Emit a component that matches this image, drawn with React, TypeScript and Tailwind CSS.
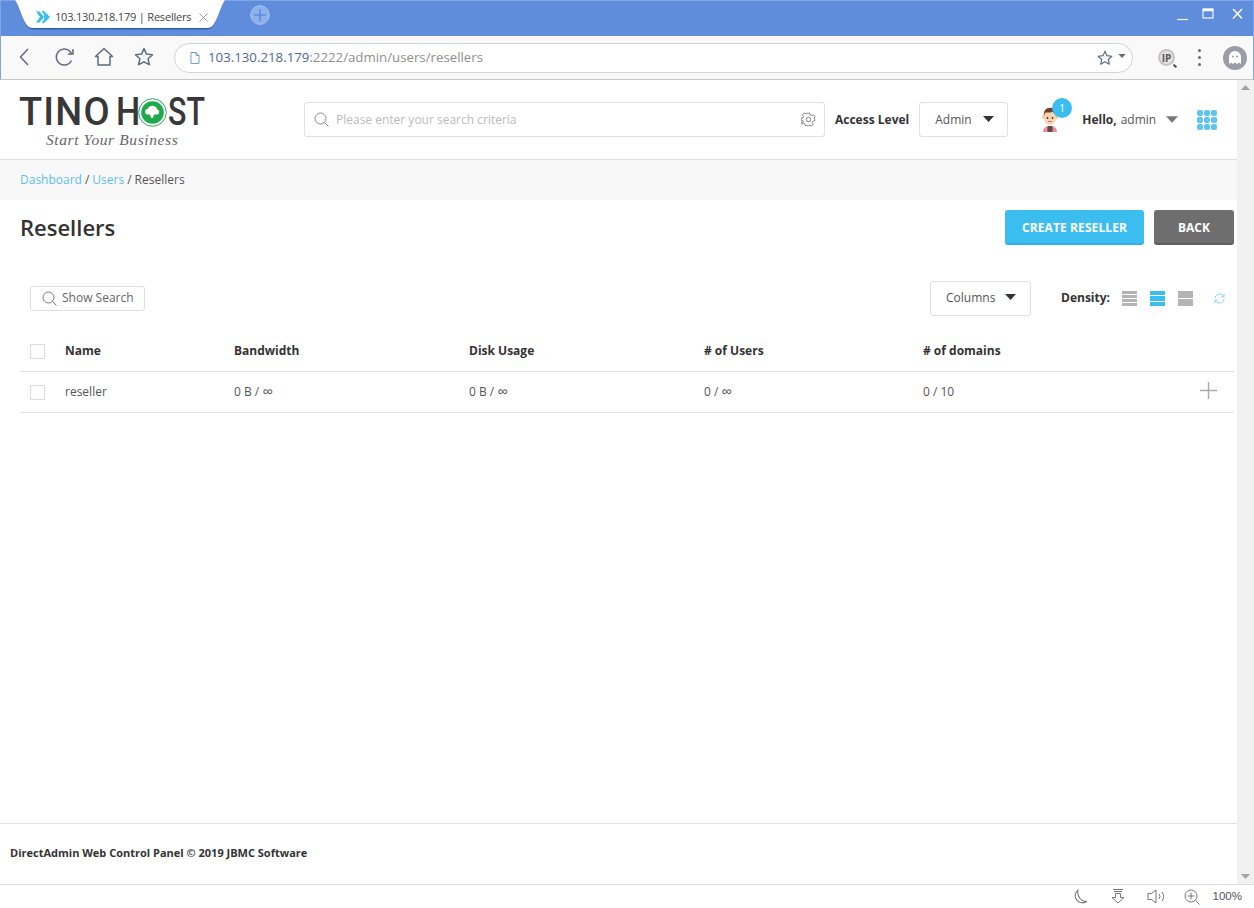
import React from "react";

const Tri = ({ c = "#333", w = 11, h = 6 }: { c?: string; w?: number; h?: number }) => (
  <svg width={w} height={h} viewBox="0 0 11 6"><path d="M0 0h11L5.500 6z" fill={c} /></svg>
);

const Star = ({ size = 20, stroke = "#5f6b7e" }: { size?: number; stroke?: string }) => (
  <svg width={size} height={size} viewBox="0 0 20 20" fill="none" stroke={stroke} strokeWidth="1.500" strokeLinejoin="round">
    <path d="M10 1.600l2.500 5.500 6 .7-4.400 4 1.200 5.900L10 14.800l-5.300 2.900 1.200-5.900-4.400-4 6-.7z" />
  </svg>
);

function BrowserChrome() {
  return (
    <div className="shrink-0">
      <div className="relative h-[36px] bg-[#5f8ddb] border-t border-l border-r border-[#7fa5e6] flex items-start">
        <svg className="absolute left-[3px] top-[-1px]" width="226" height="31" viewBox="0 0 226 31">
          <path d="M11 0C16 8 18 18 22 25c2 3 4 4.500 8 4.500h172c4 0 6-1.500 8-4.500 4-7 6-17 11-25z" fill="#2f5fb0" />
          <path d="M11 0C16 8 18 18 22 24c2 3 4 4 8 4h172c4 0 6-1 8-4 4-6 6-16 11-24z" fill="#ffffff" />
        </svg>
        <div className="relative ml-[35px] mt-[8px] flex items-center h-[16px] w-[172px]">
          <svg width="14" height="14" viewBox="0 0 14 14" className="shrink-0">
            <path d="M0 1.500h3.500L8 7l-4.500 5.500H0L4 7z" fill="#35bdf2" />
            <path d="M5.500 1h2.500l6 6-6 6H5.500L10 7z" fill="#35bdf2" />
            <path d="M8 4.500L10.500 7 8 9.500z" fill="#35bdf2" />
          </svg>
          <span className="ml-[5px] text-[11px] leading-[16px] text-[#444] whitespace-nowrap w-[135px] tracking-[-0.2px]">103.130.218.179 | Resellers</span>
          <svg className="ml-[9px] shrink-0" width="9" height="9" viewBox="0 0 9 9" stroke="#9a9a9a" strokeWidth="1"><path d="M.5.5l8 8M8.500.5l-8 8" /></svg>
        </div>
        <svg className="relative ml-[42px] mt-[4px]" width="20" height="20" viewBox="0 0 20 20">
          <circle cx="10" cy="10" r="9.300" fill="#8fb0ec" stroke="#a9c3f2" />
          <path d="M10 4v12M4 10h12" stroke="#5f8ddb" strokeWidth="1.600" />
        </svg>
        <div className="ml-auto mr-[9px] mt-[6px] flex items-center">
          <svg width="13" height="14" viewBox="0 0 13 14"><path d="M1 12.500h11" stroke="#fff" strokeWidth="1.200" /></svg>
          <svg className="ml-[13px]" width="13" height="12" viewBox="0 0 13 12" fill="none" stroke="#fff"><rect x="1" y="1" width="10" height="9" strokeWidth="1.100" /><path d="M1 2h10" strokeWidth="2.500" /></svg>
          <svg className="ml-[16px]" width="13" height="12" viewBox="0 0 13 12" stroke="#fff" strokeWidth="1.400"><path d="M2 1l9 9.500M11 1L2 10.500" /></svg>
        </div>
      </div>
      <div className="h-[44px] bg-[#f9f9f9] border-b border-[#c8c8c8] border-l border-l-[#7fa5e6] border-r border-r-[#7fa5e6] flex items-center relative">
        <div className="w-[173px] shrink-0 flex items-center pl-[17px] mb-[2px]">
          <svg width="12" height="20" viewBox="0 0 12 20" fill="none" stroke="#5f6b7e" strokeWidth="1.500"><path d="M10 2L2.500 10 10 18" /></svg>
          <svg className="ml-[24px]" width="21" height="20" viewBox="0 0 21 20" fill="none" stroke="#5f6b7e" strokeWidth="1.500">
            <path d="M17.500 13.500A8 8 0 1 1 16 4.500l2 2" /><path d="M19 2v5h-5" />
          </svg>
          <svg className="ml-[19px]" width="20" height="20" viewBox="0 0 20 20" fill="none" stroke="#5f6b7e" strokeWidth="1.500" strokeLinejoin="round"><path d="M1.500 9.500L10 1.500l8.500 8h-2.500v8.500H4V9.500z" /></svg>
          <span className="ml-[20px]"><Star /></span>
        </div>
        <div className="w-[959px] h-[30px] shrink-0 bg-white border border-[#d4d4d4] rounded-full flex items-center pl-[15px] pr-[6px] text-[13.25px]">
          <svg width="10" height="12" viewBox="0 0 10 12" fill="none" stroke="#7d9bc9"><path d="M1 .5h5l3 3v8H1zM6 .5v3h3" /></svg>
          <span className="ml-[8px] text-[#4c6a96]">103.130.218.179</span>
          <span className="text-[#8f8f8f]">:2222/admin/users/resellers</span>
          <span className="ml-auto"><Star size={16} /></span>
          <span className="ml-[5px] mb-[3px]"><Tri c="#5f6b7e" w={8} h={4} /></span>
        </div>
        <div className="flex items-center ml-[25px]">
          <div className="relative w-[17px] h-[17px] rounded-full bg-[#e2e2e2] border-2 border-[#c4c4c4] flex items-center justify-center text-[10px] leading-none font-bold text-[#555]">
            IP
            <span className="absolute right-[-4px] bottom-[-3px] w-[4px] h-[2px] bg-[#444] rotate-45" />
          </div>
          <div className="ml-[23px] flex flex-col gap-[4px]">
            <span className="w-[3px] h-[3px] rounded-full bg-[#5f6b7e]" />
            <span className="w-[3px] h-[3px] rounded-full bg-[#5f6b7e]" />
            <span className="w-[3px] h-[3px] rounded-full bg-[#5f6b7e]" />
          </div>
          <div className="ml-[22px] w-[24px] h-[24px] rounded-full bg-[#9a9ca6] flex items-center justify-center">
            <svg width="14" height="15" viewBox="0 0 14 15"><path d="M1 7a6 6 0 0 1 12 0v7l-2-1.500-2 1.500-2-1.500L5 14l-2-1.500L1 14z" fill="#fff" /><circle cx="5" cy="6.500" r="1" fill="#9a9ca6" /><circle cx="9" cy="6.500" r="1" fill="#9a9ca6" /></svg>
          </div>
        </div>
      </div>
    </div>
  );
}

function Logo() {
  return (
    <div className="w-[304px] shrink-0 pl-[19px]">
      <div className="flex items-center h-[32px] mt-[16px] text-[38px] leading-[32px] font-medium text-[#383838] font-['Roboto',sans-serif]">
        <span className="tracking-[1.200px]">TINO</span>
        <span className="ml-[5px] w-[22px] inline-block scale-x-[0.9] origin-left">H</span>
        <svg width="29" height="29" viewBox="0 0 29 29">
          <circle cx="14.500" cy="14.500" r="13.800" fill="none" stroke="#2eae5a" strokeWidth="1" />
          <circle cx="14.500" cy="14.500" r="11.300" fill="#1fa84e" />
          <path d="M9 16.500a3 3 0 0 1 .8-5.800 5 5 0 0 1 9.400.5 2.800 2.800 0 0 1 .3 5.300h-3.500l-1 3.500h-2l-1-3.500z" fill="#fff" />
        </svg>
        <span className="ml-[1px] w-[37px] inline-block scale-x-[0.8] origin-left whitespace-nowrap">ST</span>
      </div>
      <div className="pl-[27px] mt-[3px] text-[15.500px] leading-[18px] italic text-[#666] font-['Liberation_Serif',serif] tracking-[0.6px]">Start Your Business</div>
    </div>
  );
}

function Header() {
  return (
    <div className="h-[80px] shrink-0 border-b border-[#dedede] flex items-start">
      <Logo />
      <div className="pt-[22px] flex items-start">
        <div className="w-[521px] h-[35px] border border-[#e0e0e0] rounded-[3px] flex items-center pl-[9px] pr-[8px]">
          <svg width="15" height="15" viewBox="0 0 15 15" fill="none" stroke="#8a8a8a"><circle cx="6.500" cy="6.500" r="5.500" /><path d="M10.500 10.500l4 4" /></svg>
          <span className="ml-[7px] text-[12px] text-[#bcbcbc]">Please enter your search criteria</span>
          <svg className="ml-auto" width="15" height="15" viewBox="0 0 24 24" fill="none" stroke="#777" strokeWidth="1.500">
            <path d="M10 2h4l.7 3 2.300 1 2.700-1.600 2.800 2.800L20.900 10l1 2.300 0 0 0 1.700-3 .7-1 2.300 1.600 2.700-2.800 2.800-2.700-1.600-2.300 1-.7 0h-4l-.7-3-2.300-1-2.700 1.600-2.800-2.800L3.900 16l-1-2.300L0 13v-3l3-.7 1-2.300-1.600-2.700 2.800-2.800L8 3.100 9.300 2.500z" />
            <circle cx="12" cy="12" r="3.500" />
          </svg>
        </div>
        <span className="ml-[10px] mt-[9px] text-[12px] leading-[17px] font-bold text-[#333] whitespace-nowrap">Access Level</span>
        <div className="ml-[10px] w-[89px] h-[35px] border border-[#e0e0e0] rounded-[3px] flex items-center pl-[15px] text-[12px] text-[#555]">
          Admin
          <span className="ml-[11px] mb-[1px]"><Tri /></span>
        </div>
      </div>
      <div className="ml-[32px] pt-[18px] flex items-start">
        <div className="relative w-[24px] h-[34px]">
          <svg className="absolute left-0 top-[9px]" width="20" height="25" viewBox="0 0 20 25">
            <path d="M3 25c0-4 3-6 7-6s7 2 7 6z" fill="#ee8ba0" />
            <path d="M7.500 19h5v6h-5z" fill="#5d4a4a" />
            <circle cx="3.500" cy="10" r="1.800" fill="#f6c8a2" /><circle cx="16.500" cy="10" r="1.800" fill="#f6c8a2" />
            <path d="M4 9c0-4 2-5 6-5s6 1 6 5c0 6-3 9-6 9s-6-3-6-9z" fill="#fad3b0" />
            <path d="M4 9C3 3 7 0 12 1c4 0 5 4 4 8-1-3-2-4-4-4-2 1-6 0-7 1z" fill="#6b4228" />
            <circle cx="7.500" cy="11" r=".9" fill="#333" /><circle cx="12.500" cy="11" r=".9" fill="#333" />
            <path d="M8 14.500h4" stroke="#b5604c" strokeWidth=".8" />
          </svg>
          <div className="absolute left-[12px] top-0 w-[20px] h-[20px] rounded-full bg-[#3cbdf0] flex items-center justify-center text-[10px] text-white">1</div>
        </div>
        <div className="ml-[18px] mt-[13px] flex items-center whitespace-nowrap text-[12px] leading-[17px]">
          <span className="font-bold text-[#333]">Hello,</span>
          <span className="ml-[4px] text-[#555]">admin</span>
          <span className="ml-[10px]"><Tri c="#777" w={12} h={7} /></span>
        </div>
        <div className="ml-[19px] mt-[12px] grid grid-cols-3 gap-[1px] w-[20px]">
          {Array.from({ length: 9 }).map((_, i) => (
            <span key={i} className="w-[6px] h-[6px] rounded-[2px] bg-[#5cc4f0]" />
          ))}
        </div>
      </div>
    </div>
  );
}

const cols = "grid grid-cols-[45px_169px_235px_235px_219px_1fr]";

const Inf = () => <span className="text-[15px] leading-none align-[-1px]">∞</span>;

function Table() {
  return (
    <div className="ml-[20px] mr-[3px] text-[12px]">
      <div className={`${cols} h-[41px] items-center border-b border-[#dedede] font-bold text-[#333]`}>
        <span className="ml-[10px] w-[15px] h-[15px] border border-[#dcdcdc]" />
        <span>Name</span>
        <span>Bandwidth</span>
        <span>Disk Usage</span>
        <span># of Users</span>
        <span># of domains</span>
      </div>
      <div className={`${cols} h-[41px] items-center border-b border-[#e4e4e4] text-[#555]`}>
        <span className="ml-[10px] w-[15px] h-[15px] border border-[#dcdcdc]" />
        <span>reseller</span>
        <span>0 B / <Inf /></span>
        <span>0 B / <Inf /></span>
        <span>0 / <Inf /></span>
        <div className="flex items-center justify-between">
          <span>0 / 10</span>
          <svg className="mb-[3px] mr-[17px]" width="17" height="17" viewBox="0 0 17 17" stroke="#aaa" strokeWidth="1.400"><path d="M8.500 0v17M0 8.500h17" /></svg>
        </div>
      </div>
    </div>
  );
}

const Density = ({ rows, color }: { rows: number; color: string }) => (
  <div className="w-[15px] h-[15px] flex flex-col justify-between">
    {Array.from({ length: rows }).map((_, i) => (
      <span key={i} className="flex-1 mb-[1px] last:mb-0" style={{ background: color }} />
    ))}
  </div>
);

function Content() {
  return (
    <div className="flex-1 min-w-0 flex flex-col font-['Open_Sans',sans-serif]">
      <Header />
      <div className="h-[40px] shrink-0 bg-[#f8f8f8] pl-[20px] flex items-center text-[12px] text-[#555]">
        <span className="text-[#5cc0ee]">Dashboard</span>
        <span className="mx-[3px]">/</span>
        <span className="text-[#5cc0ee]">Users</span>
        <span className="mx-[3px]">/</span>
        <span>Resellers</span>
      </div>
      <div className="flex items-start justify-between pl-[20px] pr-[3px] pt-[10px] h-[81px] shrink-0">
        <h1 className="mt-[1px] text-[22px] leading-[33px] font-semibold text-[#333]">Resellers</h1>
        <div className="flex gap-[10px]">
          <div className="w-[139px] h-[35px] pt-[2px] rounded-[3px] bg-[#3cbdf0] border-b-2 border-[#2fb0e6] flex items-center justify-center text-[12px] font-bold tracking-[0.1px] text-white">CREATE RESELLER</div>
          <div className="w-[80px] h-[35px] pt-[2px] rounded-[3px] bg-[#6d6e6d] border-b-2 border-[#5e5f5e] flex items-center justify-center text-[12px] font-bold text-white">BACK</div>
        </div>
      </div>
      <div className="flex items-center pl-[30px] pr-[12px] h-[35px] shrink-0">
        <div className="w-[115px] h-[25px] mb-[1px] border border-[#dedede] rounded-[3px] flex items-center pl-[11px] text-[12px] text-[#666]">
          <svg width="15" height="15" viewBox="0 0 15 15" fill="none" stroke="#777"><circle cx="6.500" cy="6.500" r="5.500" /><path d="M10.500 10.500l4 4" /></svg>
          <span className="ml-[5px]">Show Search</span>
        </div>
        <div className="ml-auto w-[101px] h-[35px] pb-[2px] border border-[#e0e0e0] rounded-[3px] flex items-center pl-[15px] text-[12px] text-[#555]">
          Columns
          <span className="ml-[10px] mb-[1px]"><Tri /></span>
        </div>
        <span className="ml-[30px] mb-[1px] text-[12px] font-bold text-[#333]">Density:</span>
        <div className="ml-[12px] flex items-center gap-[13px]">
          <Density rows={4} color="#b4b4b4" />
          <Density rows={3} color="#3cbdf0" />
          <Density rows={2} color="#b4b4b4" />
        </div>
        <svg className="ml-[21px]" width="11" height="11" viewBox="0 0 12 12" fill="none" stroke="#7fd0f2" strokeWidth="1">
          <path d="M1 6a5 5 0 0 1 8.500-3.500L11 4M11 6a5 5 0 0 1-8.500 3.500L1 8" /><path d="M11 1v3H8M1 11V8h3" />
        </svg>
      </div>
      <div className="h-[15px] shrink-0" />
      <Table />
      <div className="flex-1" />
      <div className="h-[61px] shrink-0 pb-[2px] border-t border-[#e4e4e4] flex items-center pl-[10px] text-[11px] font-bold text-[#333]">
        DirectAdmin Web Control Panel © 2019 JBMC Software
      </div>
    </div>
  );
}

function Scrollbar() {
  return (
    <div className="w-[17px] shrink-0 bg-[#f1f1f1] flex flex-col items-center justify-between py-[5px]">
      <svg width="9" height="5" viewBox="0 0 9 5"><path d="M4.500 0L9 5H0z" fill="#a3a3a3" /></svg>
      <svg width="9" height="5" viewBox="0 0 9 5"><path d="M0 0h9L4.500 5z" fill="#a3a3a3" /></svg>
    </div>
  );
}

function StatusBar() {
  return (
    <div className="h-[24px] shrink-0 bg-white border-t border-[#dcdcdc] flex items-center justify-end pr-[12px] font-['Liberation_Sans',sans-serif]">
      <svg width="16" height="16" viewBox="0 0 15 15" fill="none" stroke="#777"><path d="M5.500 1a6.500 6.500 0 1 0 8.500 10.500C9 12.500 4.500 7 5.500 1z" /></svg>
      <svg className="ml-[23px]" width="14" height="15" viewBox="0 0 14 15" fill="none" stroke="#777"><path d="M2 .5h10M3 2.500h8M4.500 4.500h5v4h3.500L7 14 1 8.500h3.500z" /></svg>
      <svg className="ml-[22px]" width="19" height="15" viewBox="0 0 19 15" fill="none" stroke="#777"><path d="M1 4.500h3.500L9 1v13l-4.500-3.500H1zM12 5a4 4 0 0 1 0 5M15 3a7 7 0 0 1 0 9" /></svg>
      <svg className="ml-[18px]" width="16" height="16" viewBox="0 0 16 16" fill="none" stroke="#777"><circle cx="7" cy="7" r="6" /><path d="M7 3.500v7M3.500 7h7M11.500 11.500L15.500 15.500" /></svg>
      <span className="ml-[13px] text-[11.500px] text-[#555]">100%</span>
    </div>
  );
}

export default function App() {
  return (
    <div className="w-[1254px] h-[908px] flex flex-col overflow-hidden bg-white font-['Open_Sans',sans-serif]">
      <BrowserChrome />
      <div className="flex-1 min-h-0 flex">
        <Content />
        <Scrollbar />
      </div>
      <StatusBar />
    </div>
  );
}
